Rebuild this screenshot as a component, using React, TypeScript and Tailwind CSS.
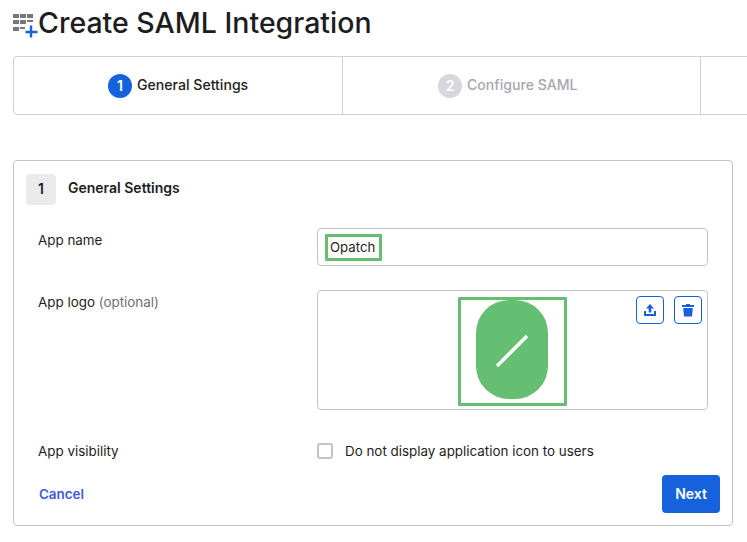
function AddAppIcon() {
  return (
    <svg width="25" height="28" viewBox="0 0 25 28" className="shrink-0 mt-[10px]">
      <g fill="#77777f">
        <rect x="0" y="4" width="6" height="4" />
        <rect x="7" y="4" width="6" height="4" />
        <rect x="14" y="4" width="6" height="4" />
        <rect x="0" y="10" width="6" height="4" />
        <rect x="7" y="10" width="6" height="4" />
        <rect x="14" y="10" width="6" height="2" />
        <rect x="0" y="17" width="6" height="4" />
        <rect x="7" y="17" width="5" height="2" />
      </g>
      <path d="M18 15.5v12M12.5 22h12" stroke="#1662dd" strokeWidth="2.4" fill="none" />
    </svg>
  );
}

function UploadIcon() {
  return (
    <svg width="14" height="14" viewBox="0 0 14 14" fill="#1662dd">
      <path d="M7 1L11 5.6H8.3V9.4H5.7V5.6H3Z" />
      <path d="M1 8H3V11H11V8H13V13H1Z" />
    </svg>
  );
}

function TrashIcon() {
  return (
    <svg width="14" height="14" viewBox="0 0 14 14" fill="#1662dd">
      <path d="M5 1H9V2H13V4H1V2H5Z" />
      <path d="M2.2 5H11.8L11 13.5H3Z" />
    </svg>
  );
}

export default function App() {
  return (
    <div
      className="w-[747px] h-[542px] overflow-hidden bg-white px-[13px] text-[#1d1d21]"
      style={{ fontFamily: "Inter, 'Noto Sans', sans-serif" }}
    >
      {/* Title */}
      <div className="flex items-start h-[46px]">
        <AddAppIcon />
        <h1 className="mt-[6px] text-[28.5px] leading-[34px] font-medium whitespace-nowrap">Create SAML Integration</h1>
      </div>

      {/* Stepper */}
      <div className="mt-[10px] flex h-[59px] w-[800px] border border-[#d0d0d4] rounded-[4px]">
        <div className="w-[329px] shrink-0 flex items-center pl-[94px] gap-[5px] border-r border-[#d0d0d4]">
          <span className="w-6 h-6 rounded-full bg-[#1662dd] text-white text-sm font-semibold flex items-center justify-center">1</span>
          <span className="text-[14.1px] font-medium leading-none">General Settings</span>
        </div>
        <div className="w-[358px] shrink-0 flex items-center pl-[95px] gap-[5px] border-r border-[#d0d0d4]">
          <span className="w-6 h-6 rounded-full bg-[#d7d7dc] text-white text-sm font-semibold flex items-center justify-center">2</span>
          <span className="text-[14.1px] font-medium leading-none text-[#a7a7b0]">Configure SAML</span>
        </div>
      </div>

      {/* Form card */}
      <div className="mt-[45px] w-[720px] h-[366px] border border-[#c4c4c8] rounded-[4px] pl-3 pr-3 pt-3">
        <div className="flex items-center h-8">
          <span className="w-[30px] h-[31px] rounded-[4px] bg-[#ebebed] flex items-center justify-center text-sm font-semibold">1</span>
          <span className="ml-3 text-sm font-semibold -mt-[2px]">General Settings</span>
        </div>

        <div className="mt-[23px] flex h-[38px]">
          <label className="ml-3 w-[279px] shrink-0 text-[13.4px] leading-[24px]">App name</label>
          <div className="w-[391px] h-[38px] border border-[#c4c4c8] rounded-[4px] flex items-center pl-[7px]">
            <span className="h-[27px] px-[2px] w-[57px] border-[3px] border-[#64bf73] rounded-[1px] text-[13.2px] leading-[21px] text-[#1d1d21]">Opatch</span>
          </div>
        </div>

        <div className="mt-[24px] flex h-[120px]">
          <label className="ml-3 w-[279px] shrink-0 text-[13.4px] leading-[24px]">
            App logo <span className="text-[#6e6e78]">(optional)</span>
          </label>
          <div className="relative w-[391px] h-[120px] border border-[#c4c4c8] rounded-[4px] pl-[140px] pt-[6px]">
            <div className="w-[109px] h-[109px] pr-[1px] border-[3px] border-[#64bf73] rounded-[1px] flex justify-center">
              <svg width="72" height="99" viewBox="0 0 72 99">
                <rect x="0" y="0" width="72" height="99" rx="33" fill="#64bf73" />
                <path d="M21 66L51 36" stroke="#fff" strokeWidth="3.4" fill="none" />
              </svg>
            </div>
            <div className="absolute top-[5px] right-[5px] flex gap-[10px]">
              <button className="w-7 h-7 border border-[#1662dd] rounded-[4px] flex items-center justify-center">
                <UploadIcon />
              </button>
              <button className="w-7 h-7 border border-[#1662dd] rounded-[4px] flex items-center justify-center">
                <TrashIcon />
              </button>
            </div>
          </div>
        </div>

        <div className="mt-[31px] flex items-center h-5">
          <span className="ml-3 w-[279px] shrink-0 text-[13.4px]">App visibility</span>
          <span className="w-4 h-4 border-2 border-[#c4c4c8] rounded-[3px]" />
          <span className="ml-3 text-[13.4px]">Do not display application icon to users</span>
        </div>

        <div className="mt-[14px] flex items-center justify-between">
          <a className="ml-[13px] text-[13.4px] font-semibold text-[#3f59d9]">Cancel</a>
          <button className="w-[58px] h-[38px] bg-[#1662dd] rounded-[4px] text-white text-sm font-semibold">Next</button>
        </div>
      </div>
    </div>
  );
}
